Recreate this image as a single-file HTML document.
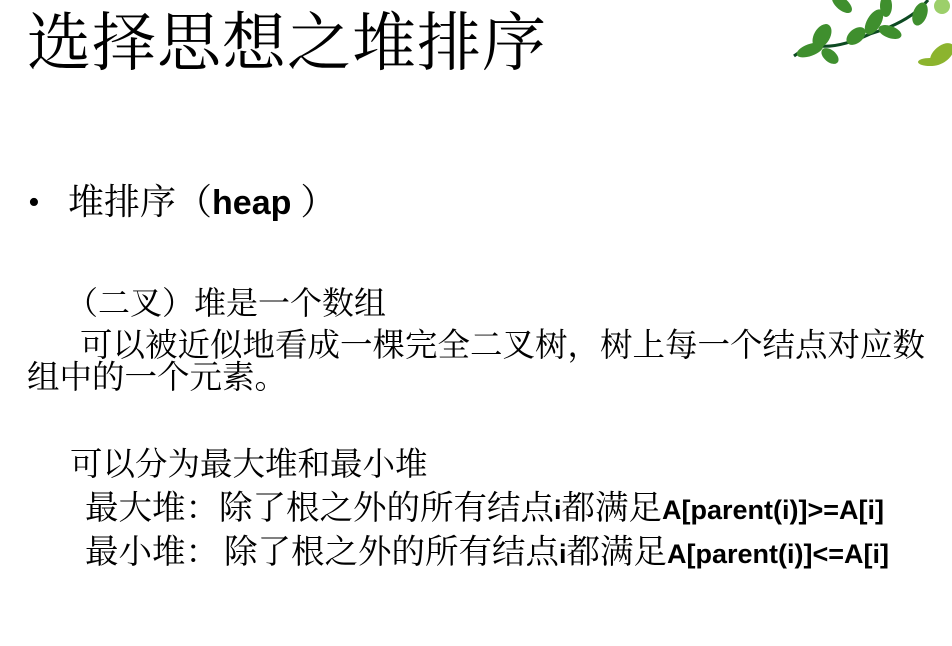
<!DOCTYPE html>
<html><head><meta charset="utf-8"><style>
html,body{margin:0;padding:0;background:#fff;width:952px;height:646px;overflow:hidden;position:relative}
.t{position:absolute;white-space:nowrap;color:#000;font-family:"Liberation Serif","Noto Serif CJK SC",serif;line-height:1}
.b{font-family:"Liberation Sans","Noto Sans CJK SC",sans-serif;font-weight:bold}
</style></head><body>
<div class="t" style="left:27px;top:12px;font-size:64px;letter-spacing:1px">选择思想之堆排序</div>
<svg style="position:absolute;left:770px;top:0" width="182" height="80" viewBox="0 0 182 80">
<path d="M24 56 Q40 44 50 46 Q70 48 100 34 Q140 22 158 0" stroke="#0d4a22" stroke-width="3" fill="none"/>
<g fill="#3f8f2e">
<ellipse cx="52" cy="36" rx="13" ry="8" transform="rotate(-60 52 36)"/>
<ellipse cx="40" cy="50" rx="14" ry="6" transform="rotate(-20 40 50)"/>
<ellipse cx="60" cy="56" rx="10" ry="6" transform="rotate(40 60 56)"/>
<ellipse cx="86" cy="36" rx="11" ry="7" transform="rotate(-40 86 36)"/>
<ellipse cx="104" cy="22" rx="14" ry="7" transform="rotate(-60 104 22)"/>
<ellipse cx="120" cy="32" rx="12" ry="6" transform="rotate(20 120 32)"/>
<ellipse cx="150" cy="14" rx="12" ry="7" transform="rotate(-70 150 14)"/>
<ellipse cx="72" cy="4" rx="12" ry="6" transform="rotate(40 72 4)"/>
<ellipse cx="116" cy="6" rx="6" ry="11"/>
<ellipse cx="172" cy="6" rx="8" ry="8" fill="#9ccf6a"/>
</g>
<g fill="#8cb42e"><ellipse cx="172" cy="54" rx="14" ry="8" transform="rotate(-40 172 54)"/><ellipse cx="160" cy="62" rx="12" ry="4"/></g>
</svg>
<div class="t" style="left:28px;top:186px;font-size:34px">•</div>
<div class="t" style="left:68px;top:184px;font-size:36px">堆排序（<span class="b" style="font-size:34px">heap</span> ）</div>
<div class="t" style="left:66px;top:287px;font-size:32px">（二叉）堆是一个数组</div>
<div class="t" style="left:80px;top:330px;font-size:32.5px">可以被近似地看成一棵完全二叉树，树上每一个结点对应数</div>
<div class="t" style="left:27px;top:362px;font-size:32.5px">组中的一个元素。</div>
<div class="t" style="left:70px;top:449px;font-size:32.5px">可以分为最大堆和最小堆</div>
<div class="t" style="left:85px;top:492px;font-size:33.5px">最大堆：除了根之外的所有结点<span class="b" style="font-size:27px">i</span>都满足<span class="b" style="font-size:27px">A[parent(i)]&gt;=A[i]</span></div>
<div class="t" style="left:85px;top:536px;font-size:33.5px">最小堆：<span style="margin-left:5px"></span>除了根之外的所有结点<span class="b" style="font-size:27px">i</span>都满足<span class="b" style="font-size:27px">A[parent(i)]&lt;=A[i]</span></div>
</body></html>
